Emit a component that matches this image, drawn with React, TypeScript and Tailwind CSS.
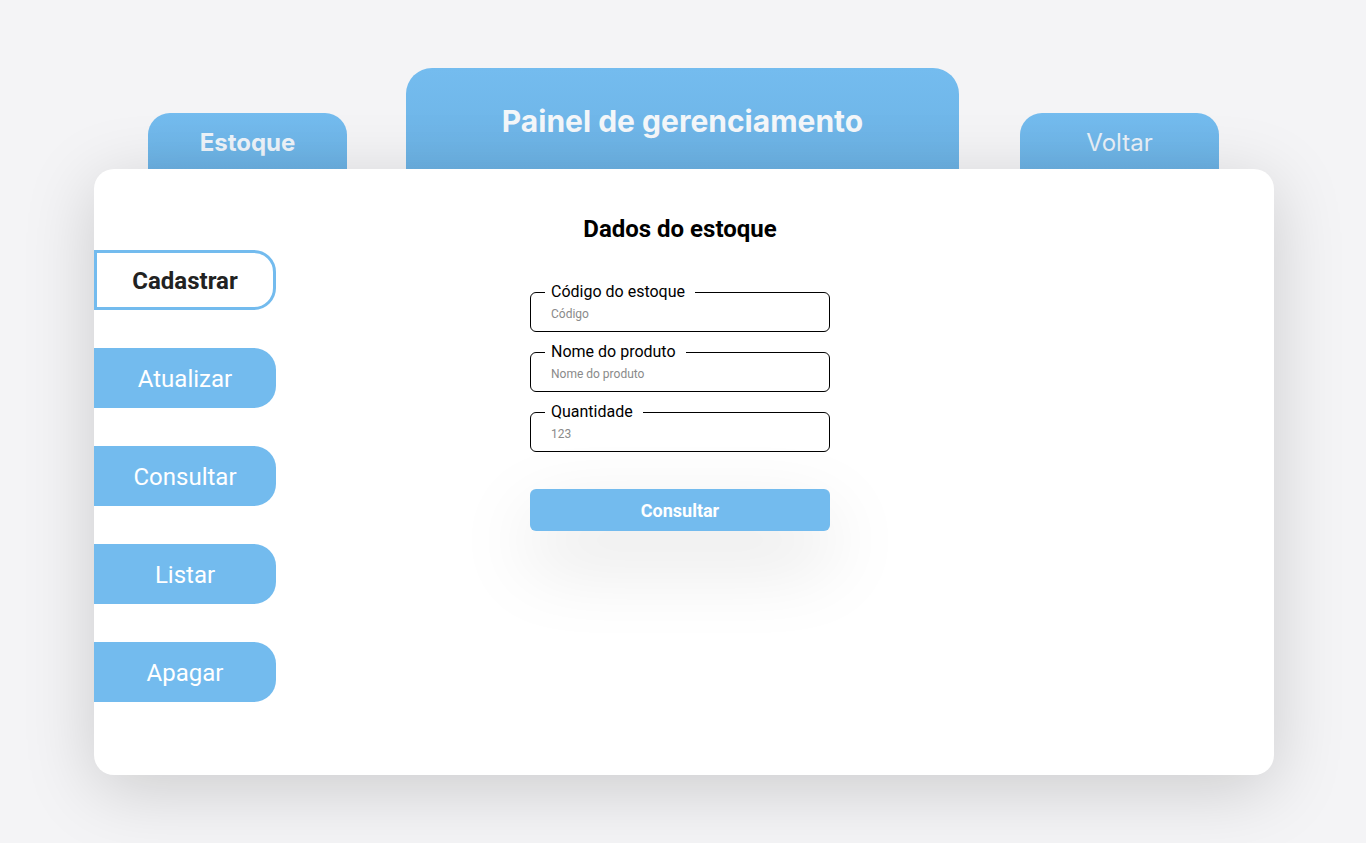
import React from "react";

const menu = ["Atualizar", "Consultar", "Listar", "Apagar"];

function Field({ label, placeholder }: { label: string; placeholder: string }) {
  return (
    <fieldset className="border border-black rounded-[6px] px-[14px] pb-[7px] m-0 min-w-0">
      <legend className="pl-[6px] pr-[10px] text-[16px] leading-[18px] text-black">{label}</legend>
      <input
        className="block w-full h-[20px] mt-[3px] pl-[6px] text-[12px] outline-none bg-transparent placeholder:text-[#8a8a8a]"
        placeholder={placeholder}
      />
    </fieldset>
  );
}

export default function App() {
  return (
    <div
      className="w-full h-[843px] bg-[#f4f4f6] overflow-hidden pt-[68px] pl-[94px]"
      style={{ fontFamily: "Roboto, 'Liberation Sans', sans-serif" }}
    >
      <div className="flex items-end" style={{ fontFamily: "Inter, Roboto, sans-serif" }}>
        <div className="ml-[54px] w-[199px] h-[56px] pt-[3px] rounded-t-[22px] bg-gradient-to-b from-[#74bcef] to-[#6cb2e4] flex items-center justify-center text-[24px] font-bold text-[#eef4fa]">
          Estoque
        </div>
        <div className="ml-[59px] w-[553px] h-[101px] rounded-t-[26px] bg-gradient-to-b from-[#74bcef] to-[#6cb2e4] flex justify-center pt-[31px] text-[30px] font-bold text-[#f4f7fa]">
          Painel de gerenciamento
        </div>
        <div className="ml-[61px] w-[199px] h-[56px] pt-[3px] rounded-t-[22px] bg-gradient-to-b from-[#74bcef] to-[#6cb2e4] flex items-center justify-center text-[24px] text-[#eaf1f8]">
          Voltar
        </div>
      </div>
      <div className="relative w-[1180px] h-[606px] bg-white rounded-[20px] shadow-[0_14px_70px_rgba(0,0,0,0.17)] flex">
        <div className="w-[182px] pt-[81px] flex flex-col gap-[38px]">
          <button className="h-[60px] w-[182px] pt-[1px] bg-white border-[3px] border-[#73bbee] rounded-r-[22px] text-[24px] font-bold text-[#222]">
            Cadastrar
          </button>
          {menu.map((m) => (
            <button key={m} className="h-[60px] w-[182px] pt-[2px] bg-[#73bbee] rounded-r-[22px] text-[24px] text-white">
              {m}
            </button>
          ))}
        </div>
        <div className="pl-[254px] pt-[45px]">
          <div className="w-[300px] flex flex-col">
            <h1 className="text-center text-[24px] leading-[30px] font-bold text-black">Dados do estoque</h1>
            <div className="mt-[39px] flex flex-col gap-[11px]">
              <Field label="Código do estoque" placeholder="Código" />
              <Field label="Nome do produto" placeholder="Nome do produto" />
              <Field label="Quantidade" placeholder="123" />
            </div>
            <button className="mt-[37px] h-[42px] w-full rounded-[6px] bg-[#73bbee] text-white text-[18px] font-bold shadow-[0_30px_80px_rgba(0,0,0,0.13)]">
              Consultar
            </button>
          </div>
        </div>
      </div>
    </div>
  );
}
